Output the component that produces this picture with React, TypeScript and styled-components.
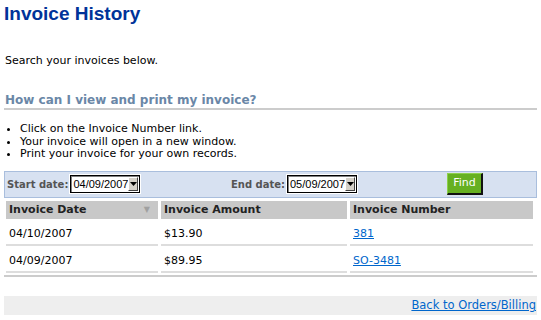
import React from 'react';
import styled, { createGlobalStyle } from 'styled-components';

type Invoice = {
  date: string;
  amount: string;
  number: string;
};

const invoices: Invoice[] = [
  { date: '04/10/2007', amount: '$13.90', number: '381' },
  { date: '04/09/2007', amount: '$89.95', number: 'SO-3481' },
];

const tips = [
  'Click on the Invoice Number link.',
  'Your invoice will open in a new window.',
  'Print your invoice for your own records.',
];

const DateSelect: React.FC<{ value: string }> = ({ value }) => (
  <SelectBox>
    <SelectValue>{value}</SelectValue>
    <SelectButton>
      <svg width="7" height="4" viewBox="0 0 7 4">
        <path d="M0 0h7L3.5 4z" fill="#000" />
      </svg>
    </SelectButton>
  </SelectBox>
);

const App: React.FC = () => {
  return (
    <Page>
      <GlobalStyle />
      <Title>Invoice History</Title>
      <Intro>Search your invoices below.</Intro>
      <SectionHeading>How can I view and print my invoice?</SectionHeading>
      <TipList>
        {tips.map((tip) => (
          <li key={tip}>{tip}</li>
        ))}
      </TipList>

      <FilterBar>
        <FilterGroup>
          <FilterLabel>Start date:</FilterLabel>
          <DateSelect value="04/09/2007" />
        </FilterGroup>
        <FilterGroup $alignEnd>
          <FilterLabel>End date:</FilterLabel>
          <DateSelect value="05/09/2007" />
        </FilterGroup>
        <FindButton>Find</FindButton>
      </FilterBar>

      <Table>
        <colgroup>
          <col style={{ width: 152 }} />
          <col style={{ width: 186 }} />
          <col />
        </colgroup>
        <thead>
          <tr>
            <HeadCell>
              <HeadInner>
                Invoice Date
                <SortArrow>▼</SortArrow>
              </HeadInner>
            </HeadCell>
            <HeadCell>Invoice Amount</HeadCell>
            <HeadCell>Invoice Number</HeadCell>
          </tr>
        </thead>
        <tbody>
          {invoices.map((inv) => (
            <tr key={inv.number}>
              <Cell>{inv.date}</Cell>
              <Cell>{inv.amount}</Cell>
              <Cell>
                <Link href="#">{inv.number}</Link>
              </Cell>
            </tr>
          ))}
        </tbody>
      </Table>
      <TableEnd />

      <Footer>
        <Link href="#">Back to Orders/Billing</Link>
      </Footer>
    </Page>
  );
};

export default App;

// styles

const GlobalStyle = createGlobalStyle`
  body {
    margin: 0;
    background: #ffffff;
    font-family: "DejaVu Sans", Verdana, sans-serif;
    font-size: 11px;
    color: #000;
  }
`;

const Page = styled.div`
  width: 533px;
  padding: 0 4px;
`;

const Title = styled.h1`
  margin: 0;
  padding-top: 3px;
  font-family: "Liberation Sans", Arial, sans-serif;
  font-size: 19px;
  font-weight: bold;
  line-height: 21px;
  color: #003399;
`;

const Intro = styled.p`
  margin: 30px 0 0 1px;
  line-height: 13px;
`;

const SectionHeading = styled.h2`
  margin: 26px 0 0;
  padding: 0 0 0 1px;
  font-size: 12px;
  font-weight: bold;
  line-height: 15px;
  color: #6a87a7;
  border-bottom: 2px solid #cccccc;
`;

const TipList = styled.ul`
  margin: 13px 0 0;
  padding: 0 0 0 16px;
  line-height: 12.5px;

  li {
    list-style: disc;
  }
`;

const FilterBar = styled.div`
  margin-top: 10px;
  height: 25px;
  display: grid;
  grid-template-columns: 133px 217px 1fr;
  align-items: center;
  background: #d7e1f1;
  border: 1px solid #a9bedd;
  padding: 0 0 0 2px;
`;

const FilterGroup = styled.div<{ $alignEnd?: boolean }>`
  display: flex;
  align-items: center;
  justify-content: ${(p) => (p.$alignEnd ? 'flex-end' : 'flex-start')};
  gap: 2px;
  white-space: nowrap;
`;

const FilterLabel = styled.span`
  flex-shrink: 0;
  font-size: 10px;
  font-weight: bold;
  color: #555555;
`;

const SelectBox = styled.div`
  flex-shrink: 0;
  display: flex;
  align-items: center;
  width: 68px;
  height: 16px;
  background: #ffffff;
  border: 1px solid #000;
  box-shadow: 0 0 0 1px #ffffff, inset 1px 1px 0 #808080;
`;

const SelectValue = styled.span`
  flex: 1;
  padding-left: 2px;
  font-family: "Liberation Sans", Arial, sans-serif;
  font-size: 11px;
  line-height: 13px;
`;

const SelectButton = styled.span`
  width: 14px;
  height: 14px;
  margin-right: 1px;
  display: flex;
  align-items: center;
  justify-content: center;
  background: #d4d0c8;
  border: 1px solid;
  border-color: #ffffff #404040 #404040 #ffffff;
  box-sizing: border-box;
`;

const FindButton = styled.button`
  justify-self: start;
  margin-left: 90px;
  width: 36px;
  height: 22px;
  padding: 0 0 2px;
  background: #66b022;
  color: #ffffff;
  font-family: "DejaVu Sans", Verdana, sans-serif;
  font-size: 11px;
  border: none;
  border-right: 2px solid #111;
  border-bottom: 2px solid #111;
  border-top: 1px solid #8cd04a;
  border-left: 1px solid #8cd04a;
`;

const Table = styled.table`
  width: 533px;
  margin-top: 3px;
  border-collapse: separate;
  border-spacing: 3px 0;
  margin-left: -1px;
  table-layout: fixed;
`;

const HeadCell = styled.th`
  height: 18px;
  padding: 0 0 0 3px;
  text-align: left;
  font-weight: bold;
  font-size: 11px;
  color: #222;
  background: #c8c8c8;
`;

const HeadInner = styled.div`
  display: flex;
  justify-content: space-between;
  align-items: center;
`;

const SortArrow = styled.span`
  font-size: 8px;
  color: #a0a0a0;
  margin-right: 8px;
`;

const Cell = styled.td`
  height: 20px;
  padding: 5px 0 0 3px;
  border-bottom: 2px solid #dddddd;
`;

const Link = styled.a`
  color: #0066cc;
  text-decoration: underline;
`;

const TableEnd = styled.div`
  margin-top: 2px;
  border-top: 2px solid #cccccc;
`;

const Footer = styled.div`
  margin-top: 19px;
  height: 19px;
  display: flex;
  align-items: center;
  justify-content: flex-end;
  background: #eeeeee;
  padding-right: 1px;
  font-size: 11.5px;
`;
